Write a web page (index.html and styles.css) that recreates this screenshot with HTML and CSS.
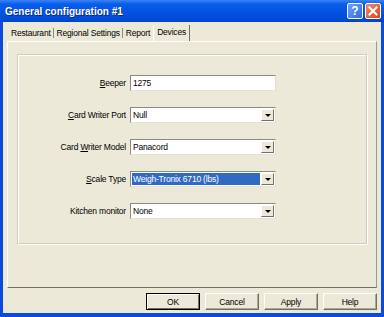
FILE: index.html
```html
<!DOCTYPE html>
<html lang="en">
<head>
    <meta charset="UTF-8">
    <title>General configuration #1</title>
    <link rel="stylesheet" href="styles.css">
</head>
<body>

<div class="window">
    <div class="titlebar">
        <span class="title">General configuration #1</span>
        <div class="caption-buttons">
            <span class="cap-btn help-btn">?</span>
            <span class="cap-btn close-btn">
                <svg width="10" height="10" viewBox="0 0 10 10"><path d="M1.5 1.5 L8.5 8.5 M8.5 1.5 L1.5 8.5" stroke="#fff" stroke-width="2" stroke-linecap="square"/></svg>
            </span>
        </div>
    </div>

    <div class="client">
        <div class="tabs">
            <div class="tab">Restaurant</div>
            <div class="tab">Regional Settings</div>
            <div class="tab no-sep">Report</div>
            <div class="tab active">Devices</div>
        </div>

        <div class="tab-page">
            <div class="group">
                <div class="row">
                    <span class="label"><u>B</u>eeper</span>
                    <div class="field">1275</div>
                </div>
                <div class="row">
                    <span class="label"><u>C</u>ard Writer Port</span>
                    <div class="field combo"><span class="value">Null</span><span class="drop"></span></div>
                </div>
                <div class="row">
                    <span class="label">Card <u>W</u>riter Model</span>
                    <div class="field combo"><span class="value">Panacord</span><span class="drop"></span></div>
                </div>
                <div class="row">
                    <span class="label"><u>S</u>cale Type</span>
                    <div class="field combo"><span class="value selected">Weigh-Tronix 6710 (lbs)</span><span class="drop"></span></div>
                </div>
                <div class="row">
                    <span class="label">Kitchen monitor</span>
                    <div class="field combo"><span class="value">None</span><span class="drop"></span></div>
                </div>
            </div>
        </div>

        <div class="buttons">
            <button class="btn default">OK</button>
            <button class="btn">Cancel</button>
            <button class="btn">Apply</button>
            <button class="btn">Help</button>
        </div>
    </div>
</div>

</body>
</html>
```

FILE: styles.css
```css
body {
    margin: 0;
    font-family: 'Liberation Sans', Arial, sans-serif;
    font-size: 8.5px;
    letter-spacing: -0.2px;
    color: #000;
    background: #fff;
}
.window {
    width: 384px;
    height: 317px;
    box-sizing: border-box;
    background: #0A4BDC;
    display: flex;
    flex-direction: column;
}
.titlebar {
    height: 22px;
    flex: none;
    display: flex;
    align-items: center;
    justify-content: space-between;
    padding: 0 3px 0 5px;
    background: linear-gradient(#3A84F5 0%, #0A5DEB 18%, #0253E2 55%, #004CDA 85%, #0042C4 100%);
}
.title {
    color: #fff;
    font-weight: bold;
    font-size: 10px;
    letter-spacing: 0;
    text-shadow: 1px 1px #0B2A8A;
}
.caption-buttons {
    display: flex;
    gap: 2px;
}
.cap-btn {
    width: 14px;
    height: 14px;
    border: 1px solid #fff;
    border-radius: 2px;
    display: flex;
    align-items: center;
    justify-content: center;
    color: #fff;
    font-weight: bold;
    font-size: 12px;
    letter-spacing: 0;
}
.help-btn {
    background: linear-gradient(135deg, #6FA0F6, #2F6BE8);
}
.close-btn {
    background: linear-gradient(135deg, #EE8E6C, #D9441C);
}
.client {
    flex: 1;
    margin: 0 3px 4px 3px;
    background: #ECE9D8;
    padding: 0 4px;
    display: flex;
    flex-direction: column;
}
.tabs {
    display: flex;
    align-items: flex-end;
    height: 19px;
    padding-left: 1px;
}
.tab {
    padding: 0 2px 0 3px;
    height: 10px;
    line-height: 10px;
    margin-bottom: 3px;
    border-right: 1px solid #8E8B80;
}
.tab.no-sep {
    border-right: none;
    padding-right: 3px;
}
.tab.active {
    height: 14px;
    line-height: 10px;
    margin-bottom: 0;
    padding: 2px 3px 0 3px;
    border-left: 1px solid #fff;
    border-right: 1px solid #716F64;
}
.tab-page {
    height: 247px;
    box-sizing: border-box;
    border-top: 1px solid #fff;
    border-left: 1px solid #fff;
    border-right: 1px solid #9D9A8C;
    border-bottom: 1px solid #716F64;
    padding: 12px 9px 0 9px;
}
.group {
    height: 190px;
    box-sizing: border-box;
    border: 1px solid #D0CDBE;
    box-shadow: 1px 1px 0 #fff, inset 1px 1px 0 #fff;
    padding-top: 20px;
    display: flex;
    flex-direction: column;
    gap: 16px;
}
.row {
    display: grid;
    grid-template-columns: 108px 146px;
    column-gap: 4px;
    align-items: center;
}
.label {
    text-align: right;
}
.field {
    height: 16px;
    box-sizing: border-box;
    background: #fff;
    border-top: 1px solid #8E8B7E;
    border-left: 1px solid #8E8B7E;
    border-right: 1px solid #E4E1D3;
    border-bottom: 1px solid #E4E1D3;
    padding: 0 2px;
    line-height: 14px;
}
.combo {
    display: flex;
    align-items: center;
    padding: 0 1px 0 1px;
}
.value {
    flex: 1;
    height: 12px;
    line-height: 12px;
    padding-left: 1px;
}
.value.selected {
    background: #316AC5;
    color: #fff;
    margin-right: 1px;
}
.drop {
    width: 13px;
    height: 12px;
    box-sizing: border-box;
    background: #ECE9D8;
    border-top: 1px solid #fff;
    border-left: 1px solid #fff;
    border-right: 1px solid #716F64;
    border-bottom: 1px solid #716F64;
    display: flex;
    align-items: center;
    justify-content: center;
}
.drop::after {
    content: "";
    border-left: 3px solid transparent;
    border-right: 3px solid transparent;
    border-top: 3px solid #000;
    margin-top: 1px;
}
.buttons {
    display: flex;
    justify-content: flex-end;
    gap: 5px;
    padding-top: 5px;
}
.btn {
    width: 54px;
    height: 17px;
    padding: 0;
    font-family: inherit;
    font-size: inherit;
    letter-spacing: inherit;
    color: #000;
    background: #ECE9D8;
    border-top: 1px solid #fff;
    border-left: 1px solid #fff;
    border-right: 1px solid #716F64;
    border-bottom: 1px solid #716F64;
    box-shadow: inset -1px -1px 0 #ACA899;
}
.btn.default {
    border: 1px solid #000;
    box-shadow: inset 1px 1px 0 #fff, inset -1px -1px 0 #716F64;
}
```
